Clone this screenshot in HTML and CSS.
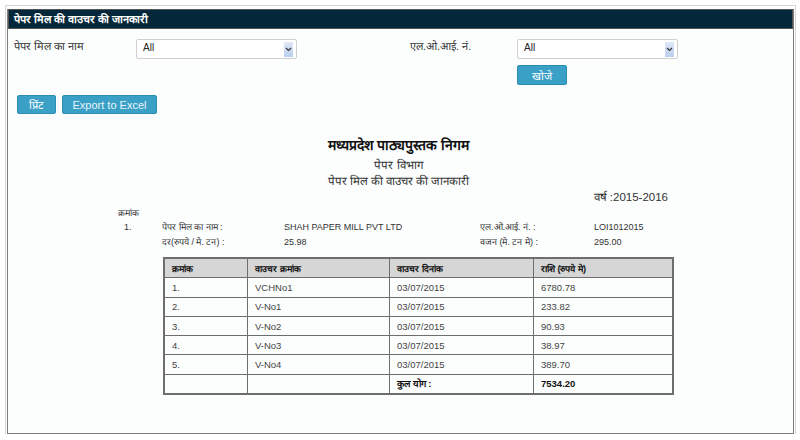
FILE: index.html
```html
<!DOCTYPE html>
<html>
<head>
<meta charset="utf-8">
<link rel="stylesheet" href="styles.css">
</head>
<body>
<div class="frame">
  <div class="panel">
    <div class="header">पेपर मिल की वाउचर की जानकारी</div>
    <div class="filters">
      <label class="lbl">पेपर मिल का नाम</label>
      <div class="select"><span>All</span><i class="arrow"><svg width="7" height="5" viewBox="0 0 7 5"><path d="M1 1 L3.5 3.5 L6 1" fill="none" stroke="#333" stroke-width="1.2"/></svg></i></div>
      <span></span>
      <label class="lbl">एल.ओ.आई. नं.</label>
      <div class="select"><span>All</span><i class="arrow"><svg width="7" height="5" viewBox="0 0 7 5"><path d="M1 1 L3.5 3.5 L6 1" fill="none" stroke="#333" stroke-width="1.2"/></svg></i></div>
      <button class="btn search">खोजे</button>
    </div>
    <div class="actions">
      <button class="btn print">प्रिंट</button>
      <button class="btn excel">Export to Excel</button>
    </div>
    <div class="report">
      <div class="org">मध्यप्रदेश पाठ्यपुस्तक निगम</div>
      <div class="sub first">पेपर विभाग</div>
      <div class="sub">पेपर मिल की वाउचर की जानकारी</div>
      <div class="year">वर्ष :2015-2016</div>
      <div class="details">
        <div class="kr">क्रमांक</div>
        <div class="d-row">
          <span class="num">1.</span>
          <span class="k">पेपर मिल का नाम :</span>
          <span class="v">SHAH PAPER MILL PVT LTD</span>
          <span class="k2">एल.ओ.आई. नं. :</span>
          <span class="v2">LOI1012015</span>
        </div>
        <div class="d-row">
          <span class="num"></span>
          <span class="k">दर(रुपये / मे. टन) :</span>
          <span class="v">25.98</span>
          <span class="k2">वजन (मे. टन मे) :</span>
          <span class="v2">295.00</span>
        </div>
      </div>
      <table class="vt">
        <thead>
          <tr><th class="c1">क्रमांक</th><th class="c2">वाउचर क्रमांक</th><th class="c3">वाउचर दिनांक</th><th class="c4">राशि (रुपये मे)</th></tr>
        </thead>
        <tbody>
          <tr><td>1.</td><td>VCHNo1</td><td>03/07/2015</td><td>6780.78</td></tr>
          <tr><td>2.</td><td>V-No1</td><td>03/07/2015</td><td>233.82</td></tr>
          <tr><td>3.</td><td>V-No2</td><td>03/07/2015</td><td>90.93</td></tr>
          <tr><td>4.</td><td>V-No3</td><td>03/07/2015</td><td>38.97</td></tr>
          <tr><td>5.</td><td>V-No4</td><td>03/07/2015</td><td>389.70</td></tr>
          <tr class="total"><td></td><td></td><td>कुल योग :</td><td>7534.20</td></tr>
        </tbody>
      </table>
    </div>
  </div>
</div>
</body>
</html>
```
FILE: styles.css
```css
html, body {
  margin: 0;
  padding: 0;
  background: #ffffff;
  font-family: "Liberation Sans", Arial, sans-serif;
  color: #333;
}
.frame {
  margin: 5px 4px 0 5px;
  border: 1px solid #d6d6d6;
  border-bottom: none;
  padding: 3px 1px 0 1px;
  height: 429px;
  box-sizing: border-box;
}
.panel {
  border: 1px solid #7c7c7c;
  border-top: none;
  background: #fcfefe;
  height: 425px;
  box-sizing: border-box;
}
.header {
  background: #04283a;
  border: 1px solid #555;
  color: #fff;
  font-weight: bold;
  font-size: 11px;
  height: 20px;
  line-height: 18px;
  padding-left: 5px;
  box-sizing: border-box;
}
.filters {
  display: grid;
  grid-template-columns: 122px 161px 113px 107px 161px;
  grid-auto-rows: 20px;
  row-gap: 6px;
  padding: 10px 0 0 6px;
}
.lbl {
  font-size: 11px;
  color: #333;
  line-height: 14px;
}
.select {
  border: 1px solid #cfcfcf;
  border-radius: 2px;
  background: #fff;
  display: flex;
  align-items: center;
  justify-content: space-between;
  padding: 0 3px 0 6px;
  font-size: 10px;
  color: #222;
  box-sizing: border-box;
}
.select span { margin-top: -4px; }
.arrow {
  width: 9px;
  height: 15px;
  background: linear-gradient(#dfe8f6, #b9cdee);
  display: flex;
  align-items: center;
  justify-content: center;
}
.btn {
  background: #3aa0c6;
  border: 1px solid #2a8db1;
  border-radius: 2px;
  color: #fff;
  font-family: "Liberation Sans", Arial, sans-serif;
  font-size: 11px;
  padding: 0;
  height: 20px;
  box-sizing: border-box;
}
.search {
  grid-column: 5;
  width: 50px;
}
.actions {
  display: flex;
  gap: 6px;
  padding: 10px 0 0 9px;
}
.print { width: 39px; height: 19px; }
.excel { width: 95px; height: 19px; color: #e8f4f9; }
.report {
  padding-top: 21px;
}
.org {
  text-align: center;
  font-weight: bold;
  font-size: 14px;
  color: #111;
  line-height: 20px;
  padding-right: 4px;
}
.sub {
  text-align: center;
  font-size: 11.5px;
  color: #333;
  line-height: 16px;
  padding-right: 4px;
}
.sub.first { margin-top: 2px; }
.year {
  text-align: right;
  font-size: 11.5px;
  color: #333;
  padding-right: 125px;
  line-height: 16px;
  margin-top: 0;
}
.details {
  padding-left: 110px;
  font-size: 9px;
  color: #333;
}
.kr {
  font-size: 9px;
  line-height: 14px;
  margin-top: 1px;
}
.d-row {
  display: grid;
  grid-template-columns: 38px 122px 196px 114px 80px;
  line-height: 15px;
  padding-left: 6px;
}
.vt {
  border-collapse: collapse;
  margin: 7px 0 0 155px;
  width: 511px;
  border: 2px solid #6e6e6e;
  font-size: 9.5px;
}
.vt th, .vt td {
  border: 1px solid #6e6e6e;
  text-align: left;
  padding: 0 7px;
  height: 18.3px;
}
.vt th {
  background: #d6d6d6;
  font-weight: bold;
  color: #111;
  font-size: 9px;
}
.vt td { color: #444; }
.c1 { width: 68px; }
.c2 { width: 127px; }
.c3 { width: 129px; }
.total td { font-weight: bold; color: #111; }
```
